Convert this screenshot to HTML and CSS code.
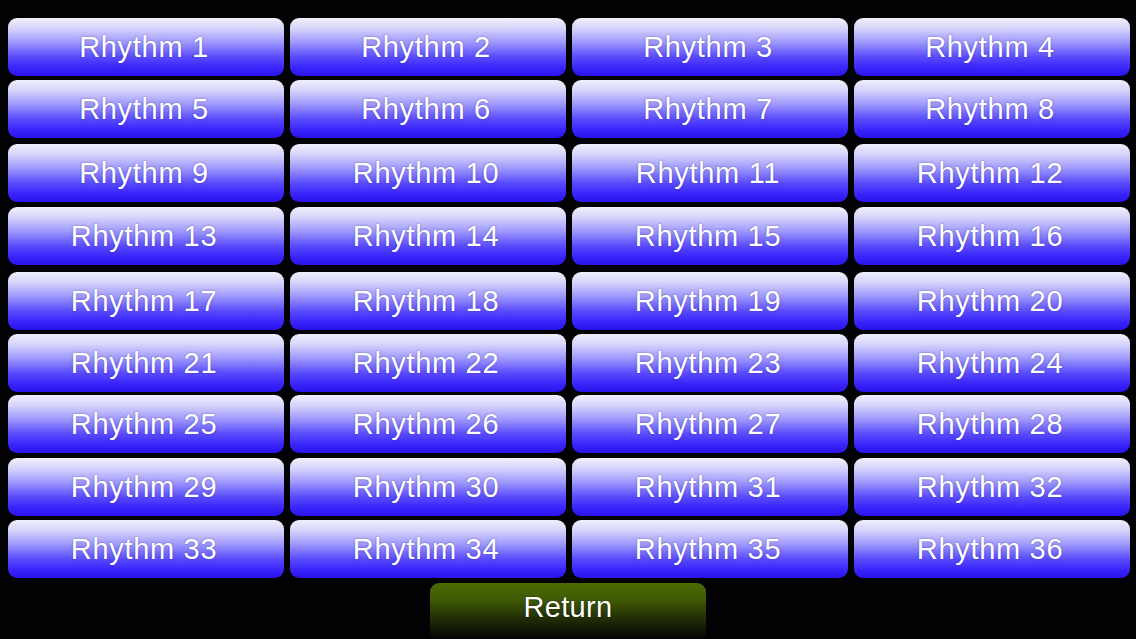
FILE: index.html
```html
<!DOCTYPE html>
<html>
<head>
<meta charset="utf-8">
<link rel="stylesheet" href="styles.css">
</head>
<body>
<div class="page">
  <div class="grid">
    <div class="btn">Rhythm 1</div><div class="btn">Rhythm 2</div><div class="btn">Rhythm 3</div><div class="btn">Rhythm 4</div>
    <div class="btn">Rhythm 5</div><div class="btn">Rhythm 6</div><div class="btn">Rhythm 7</div><div class="btn">Rhythm 8</div>
    <div class="btn">Rhythm 9</div><div class="btn">Rhythm 10</div><div class="btn">Rhythm 11</div><div class="btn">Rhythm 12</div>
    <div class="btn">Rhythm 13</div><div class="btn">Rhythm 14</div><div class="btn">Rhythm 15</div><div class="btn">Rhythm 16</div>
    <div class="btn">Rhythm 17</div><div class="btn">Rhythm 18</div><div class="btn">Rhythm 19</div><div class="btn">Rhythm 20</div>
    <div class="btn">Rhythm 21</div><div class="btn">Rhythm 22</div><div class="btn">Rhythm 23</div><div class="btn">Rhythm 24</div>
    <div class="btn">Rhythm 25</div><div class="btn">Rhythm 26</div><div class="btn">Rhythm 27</div><div class="btn">Rhythm 28</div>
    <div class="btn">Rhythm 29</div><div class="btn">Rhythm 30</div><div class="btn">Rhythm 31</div><div class="btn">Rhythm 32</div>
    <div class="btn">Rhythm 33</div><div class="btn">Rhythm 34</div><div class="btn">Rhythm 35</div><div class="btn">Rhythm 36</div>
  </div>
  <div class="footer">
    <div class="return">Return</div>
  </div>
</div>
</body>
</html>
```
FILE: styles.css
```css
html, body {
  margin: 0;
  padding: 0;
  background: #000;
}
.page {
  width: 1136px;
  height: 639px;
  background: #020204;
  padding: 18px 6px 0 8px;
  box-sizing: border-box;
  font-family: "Liberation Sans", Arial, sans-serif;
  overflow: hidden;
}
.grid {
  display: grid;
  grid-template-columns: repeat(4, 276px);
  grid-template-rows: 62px 64px 63px 65px 62px 61px 63px 62px 58px;
  column-gap: 6px;
  align-items: start;
}
.btn {
  height: 58px;
  border-radius: 9px;
  background: linear-gradient(to bottom, #f0f0fb 0%, #d6d4fb 18%, #9e98fc 42%, #5c4efc 66%, #3a26fb 85%, #2a12ec 100%);
  color: #fff;
  font-size: 29px;
  letter-spacing: 0.7px;
  padding-right: 4px;
  box-sizing: border-box;
  display: flex;
  align-items: center;
  justify-content: center;
  text-shadow: 0 0 2px rgba(40, 30, 120, 0.55);
}
.footer {
  display: flex;
  justify-content: center;
  padding-top: 5px;
  padding-right: 2px;
}
.return {
  width: 276px;
  height: 56px;
  border-radius: 9px 9px 4px 4px;
  background: linear-gradient(to bottom, #4c6c02 0%, #3f5a04 30%, #243206 60%, #0c0f04 90%, #050604 100%);
  color: #fff;
  font-size: 29px;
  letter-spacing: 0.3px;
  display: flex;
  align-items: flex-start;
  justify-content: center;
  padding-top: 8px;
  box-sizing: border-box;
  text-shadow: 0 0 2px rgba(0, 0, 0, 0.6);
}
```
